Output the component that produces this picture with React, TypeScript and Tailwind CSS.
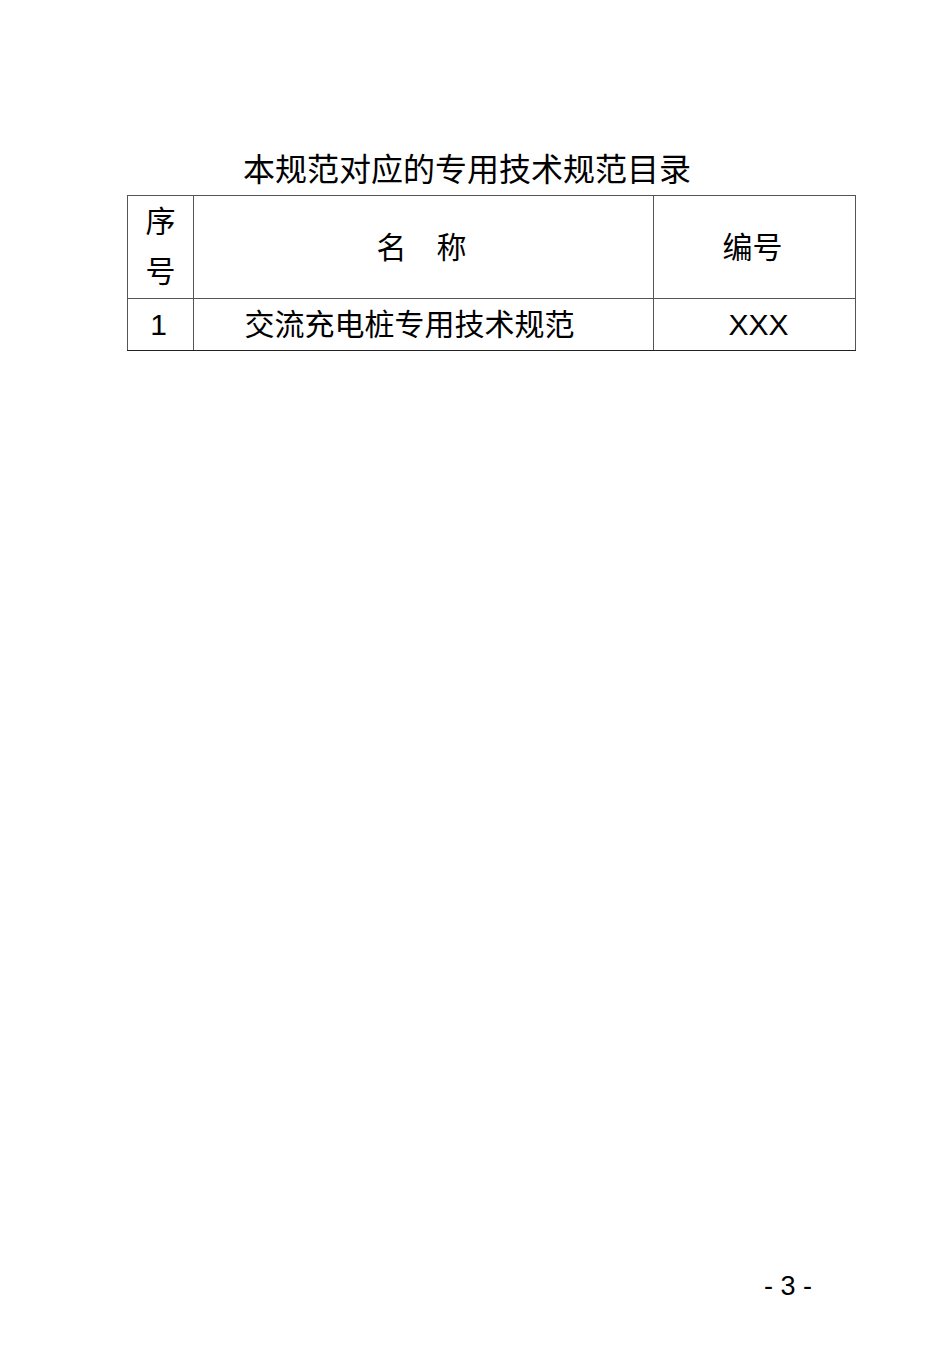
import React from 'react';

const font = { fontFamily: '"Liberation Sans", "Noto Sans CJK SC", sans-serif' };

const App: React.FC = () => {
  return (
    <div
      className="w-[950px] h-[1346px] bg-white text-black flex flex-col font-['Liberation_Sans','Noto_Sans_CJK_SC',sans-serif]"
      style={font}
    >
      <div className="pt-[150px] pl-[243px] text-[32px] leading-[40px]">
        本规范对应的专用技术规范目录
      </div>
      <table className="ml-[127px] mt-[5px] w-[728px] border-collapse text-[30px] table-fixed">
        <colgroup>
          <col className="w-[66px]" />
          <col className="w-[460px]" />
          <col className="w-[202px]" />
        </colgroup>
        <tbody>
          <tr className="h-[103px]">
            <td className="border-[1.5px] border-[#555] text-center align-middle leading-[50px]">
              <span className="block">序</span>
              <span className="block">号</span>
            </td>
            <td className="border-[1.5px] border-[#555] text-center align-middle pr-[4px]">名　称</td>
            <td className="border-[1.5px] border-[#555] text-center align-middle pr-[4px]">编号</td>
          </tr>
          <tr className="h-[52px]">
            <td className="border-[1.5px] border-[#555] border-b-[#222] text-center align-middle pr-[4px]">1</td>
            <td className="border-[1.5px] border-[#555] border-b-[#222] text-center align-middle pr-[28px]">
              交流充电桩专用技术规范
            </td>
            <td className="border-[1.5px] border-[#555] border-b-[#222] text-center align-middle pl-[8px]">XXX</td>
          </tr>
        </tbody>
      </table>
      <div className="mt-auto pb-[44px] pl-[764px] text-[27px] leading-[32px]">- 3 -</div>
    </div>
  );
};

export default App;
